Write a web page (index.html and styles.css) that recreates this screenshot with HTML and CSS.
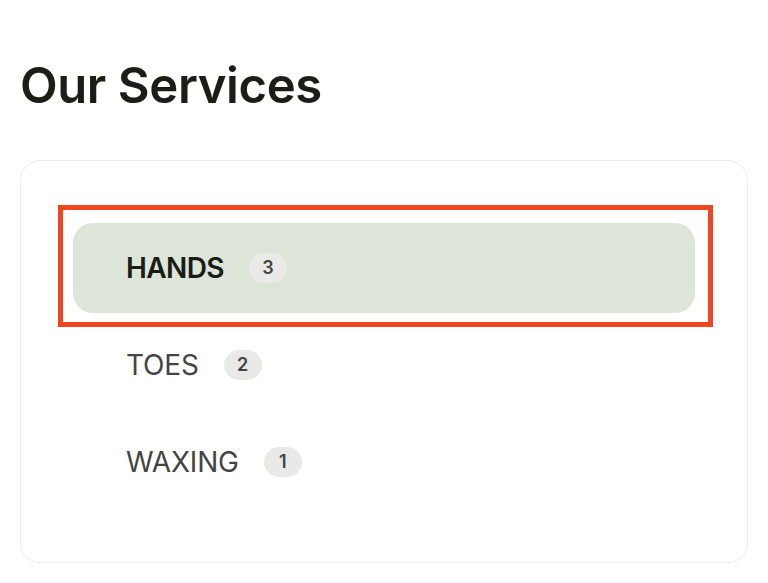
FILE: index.html
```html
<!DOCTYPE html>
<html lang="en">
<head>
    <meta charset="UTF-8">
    <meta name="viewport" content="width=device-width, initial-scale=1.0">
    <title>Our Services</title>
    <link rel="stylesheet" href="styles.css">
</head>
<body>
    <div class="container">
        <h1 class="page-title">Our Services</h1>

        <div class="service-card">
            <ul class="category-list">
                <li class="category-item active">
                    <span class="category-name">HANDS</span>
                    <span class="category-count">3</span>
                    <span class="highlight-box"></span>
                </li>
                <li class="category-item">
                    <span class="category-name">TOES</span>
                    <span class="category-count">2</span>
                </li>
                <li class="category-item">
                    <span class="category-name">WAXING</span>
                    <span class="category-count">1</span>
                </li>
            </ul>
        </div>
    </div>
</body>
</html>
```

FILE: styles.css
```css
* {
    margin: 0;
    padding: 0;
    box-sizing: border-box;
}

body {
    font-family: Inter, "Noto Sans", sans-serif;
    background-color: #fff;
    color: #1b1d17;
}

.container {
    padding: 57px 20px 20px 20px;
}

.page-title {
    font-size: 49px;
    font-weight: 600;
    line-height: 1.2;
    letter-spacing: -0.4px;
    color: #1b1d17;
    margin-bottom: 44px;
}

.service-card {
    width: 728px;
    border: 1.5px solid #ededed;
    border-radius: 20px;
    padding: 62px 52px 55px 52px;
}

.category-list {
    list-style: none;
    display: flex;
    flex-direction: column;
    gap: 7px;
}

.category-item {
    position: relative;
    display: flex;
    align-items: center;
    gap: 25px;
    height: 90px;
    padding-left: 53px;
    border-radius: 20px;
}

.category-item.active {
    background-color: #dde5d9;
}

.category-name {
    font-size: 28px;
    font-weight: 400;
    color: #444;
    letter-spacing: -0.2px;
}

.active .category-name {
    font-weight: 600;
    color: #1a1c16;
    letter-spacing: -0.6px;
}

.category-count {
    display: inline-flex;
    align-items: center;
    justify-content: center;
    min-width: 38px;
    height: 30px;
    border-radius: 15px;
    background-color: #e9e9e7;
    font-size: 18px;
    font-weight: 600;
    color: #444;
}

.highlight-box {
    position: absolute;
    top: -18px;
    left: -15px;
    right: -18px;
    bottom: -14px;
    border: 5px solid #ee4523;
    pointer-events: none;
}
```
